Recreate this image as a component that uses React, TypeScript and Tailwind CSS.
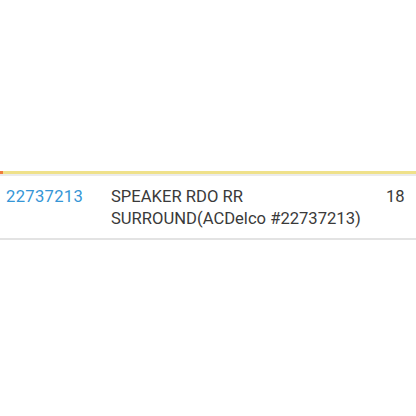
import React from 'react';

const App = () => {
  return (
    <div className="w-[416px] h-[416px] bg-white pt-[171px] font-['Roboto',sans-serif]">
      <div className="flex h-[3px]">
        <div className="w-[3px] bg-[#f07c3e]" />
        <div className="flex-1 bg-[#efe18a]" />
      </div>
      <div className="h-[2px] bg-[#ebebeb]" />
      <div className="flex pt-[10px] pb-[8px] border-b-2 border-[#e3e3e3] text-[16.6px] leading-[22px] text-[#3a3a3a]">
        <div className="w-[105px] pl-[6px] text-[#3596d6] tracking-[0.3px]">22737213</div>
        <div className="w-[275px] pl-[6px] pr-[6px]">SPEAKER RDO RR SURROUND(ACDelco #22737213)</div>
        <div className="pl-[6px]">18</div>
      </div>
    </div>
  );
};

export default App;
